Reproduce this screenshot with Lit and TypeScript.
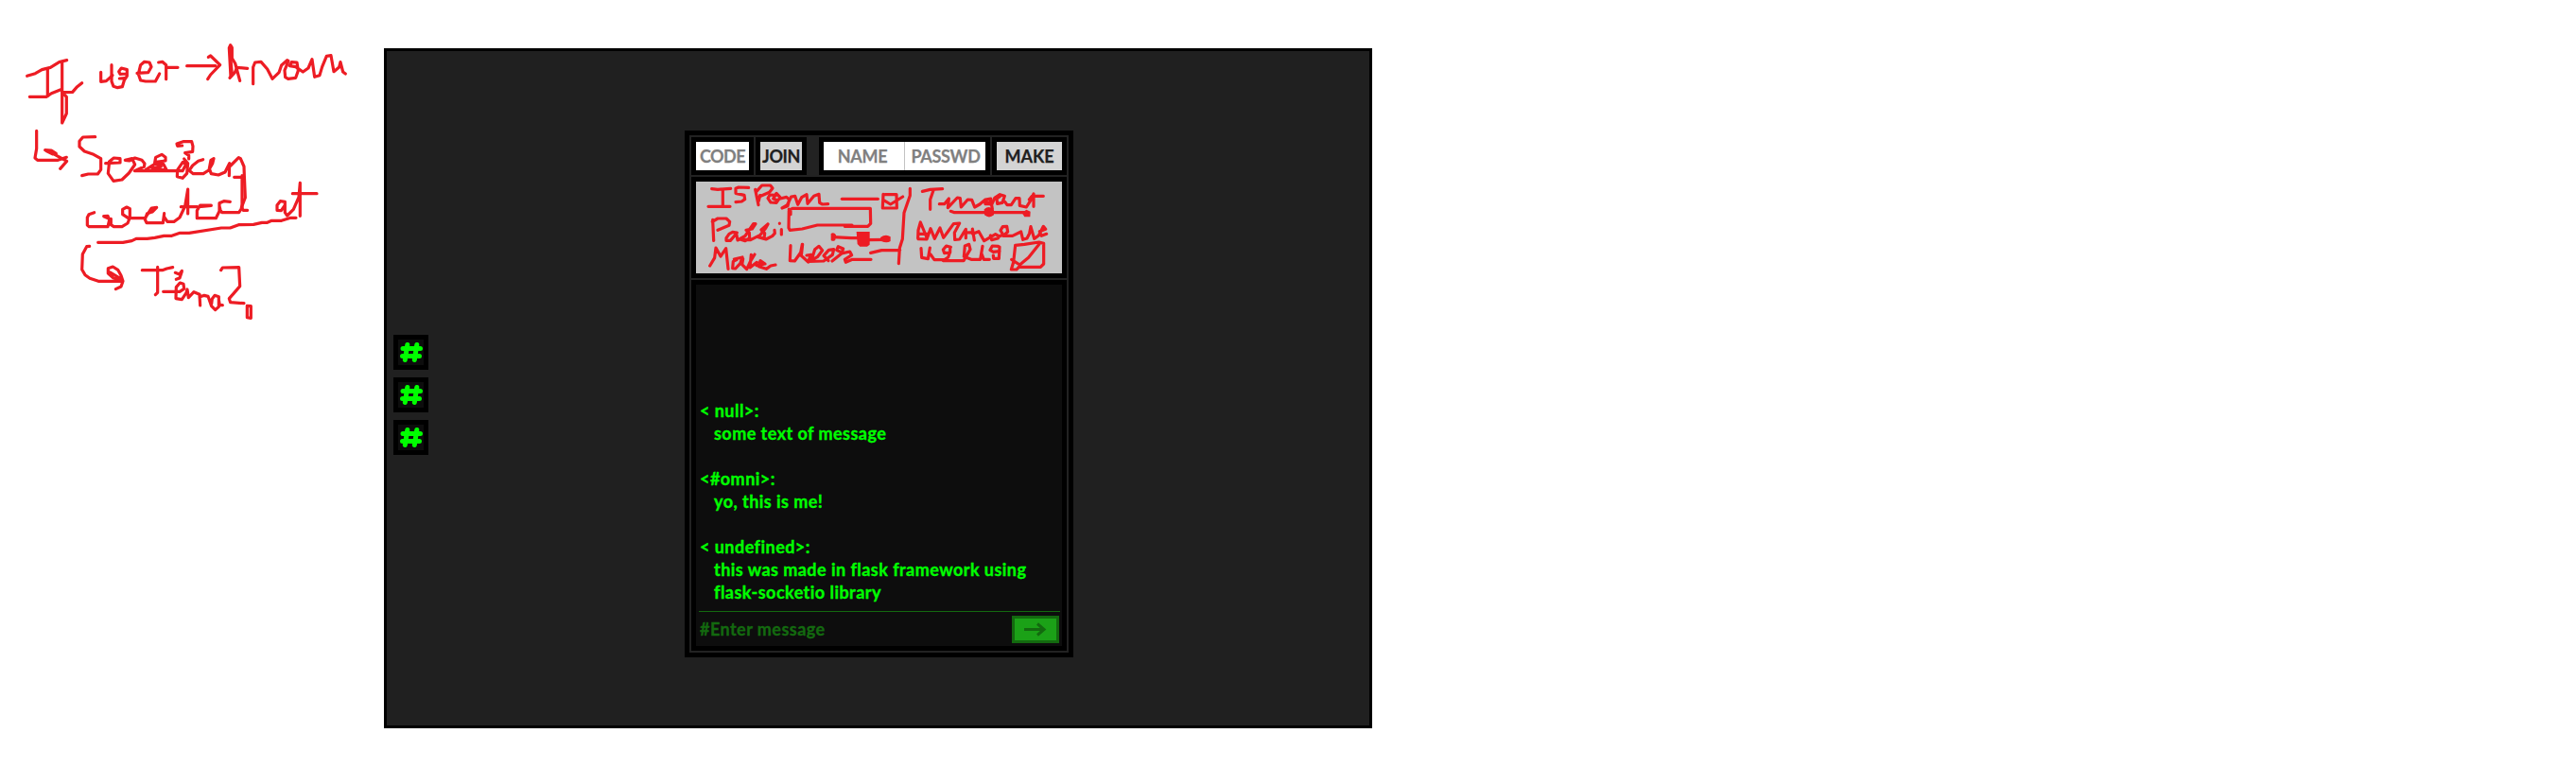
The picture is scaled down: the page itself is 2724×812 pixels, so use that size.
import { LitElement, html, css, svg } from "lit";
import { customElement } from "lit/decorators.js";

const messages = [
  { user: "< null>:", lines: ["some text of message"] },
  { user: "<#omni>:", lines: ["yo, this is me!"] },
  { user: "< undefined>:", lines: ["this was made in flask framework using", "flask-socketio library"] },
];

/* Strokes are stored at three units per pixel, grouped by origin. */
const introStrokes = [
  // "If"
  "M86 151L112 143L133 131L160 124L188 107L212 101", "M151 128V214", "M94 217H148L163 206L193 194",
  "M197 106V300L211 270V217L197 203L230 202L243 187L260 173",
  // "user"
  "M320 139V169L337 167L357 149", "M354 116V168L360 184L373 188L388 185L394 165L403 151V131L385 126L377 137L381 145L400 144M379 159L396 158",
  "M435 142L470 140L480 122L474 108L458 106L446 116L439 145L446 165L462 168H493L506 144",
  "M503 108L515 106L527 116V161M529 124H564",
  // arrow
  "M593 119H684", "M661 91L668 87L698 116L668 147L659 161",
  // "Anonn"
  "M732 152L727 62L731 53L736 61V95L746 111L761 166", "M732 100L736 145M729 157L745 140L752 124L785 127",
  "M803 176V123L809 108L828 106L848 129L864 160L885 140L893 117L911 101L915 103L903 133L905 155L914 160L938 157L946 134L942 108L925 107L919 119L938 122L961 138L978 126L990 98L998 154L1014 149L1022 122L1036 88L1050 86L1059 137L1076 123L1080 107L1088 138L1096 144",
  // corner arrow
  "M116 325V382L111 411L119 418H184L211 409", "M143 386L163 387L178 397L168 399L147 389M168 397L212 421L191 445",
];
const sessionStrokes = [
  "M92 14L53 15L42 28V45L58 60L87 70L110 83V118L100 132L70 132L50 137",
  "M125 98L171 96V83L151 81L137 92L133 130L150 154L177 150L199 129L218 102L209 83L187 88L200 90L218 81L240 88L249 99L247 109L217 122H369L380 101L370 94L353 119L352 140L369 145L383 130L386 98L374 84",
  "M252 119L280 101L284 79L303 70L315 79V90L285 94M280 101L308 100L319 120L273 114L301 108",
  "M368 42L353 43L351 36L371 29H398L402 44L401 61L377 65L389 73V84",
  "M434 86L419 91L401 105L390 121L403 131H435L452 120L464 99L468 83L459 88L454 115L460 131L483 135L504 126L518 98L517 137M522 105L547 80L553 83L564 108L565 137L568 207L556 238L561 247H575",
  "M533 142H558M558 137V240",
  // "created at"
  "M89 254L72 260L67 270V294L73 299H132L137 278L132 265L119 266L133 272M142 274V293L151 299H177L195 288L202 270V242L192 237L179 244V260L197 272H250L271 240L287 238L273 252L257 257L250 276L255 287H307L311 257M311 268L321 283H342L360 270L377 234L386 180V258M364 236H416",
  "M460 231H425L415 248V272H475L486 250V224L500 218L520 220M428 235L460 232M486 234L489 246L494 254H548L557 240",
  "M694 220L679 218L669 231V247L682 248L694 231V220V254L701 264L721 244L738 205L742 160V265M718 194H795",
];
const timeStrokes = [
  "M311 229H390L418 224L432 217H467L491 214L520 208H545L571 199H600L702 183H730L757 173L804 172L831 166H848L862 160H893L922 151H939",
  "M284 241L275 242L262 266L260 315L270 332L285 343L312 352H387", "M388 350L360 342L343 327V311L358 306L374 316L384 334L390 352L384 369L367 377M350 324L385 345",
  "M451 317H515L529 312L548 308M500 307V388L493 395", "M518 385H570L584 376L582 361L571 357L559 371L558 407L577 410L591 389L594 378L598 404L615 386L633 394L635 429M633 402L648 397L660 400L671 431L683 443L694 433V401L681 397L673 408L671 424M694 411L697 428L706 428",
  "M556 325L569 330L577 319M577 321L570 342L559 346",
  "M701 317L706 309L758 308L761 368L741 391L727 407L731 419L774 422", "M784 430V467L796 469V431Z",
];
const leftNotes = [
  "M98 209L117 211L158 208M133 210V263M87 265H156", "M215 205L183 204L174 208V223L201 229L203 242L193 249L174 251",
  "M236 211L246 260M240 217L257 198H284L291 207L281 220L250 233M251 230L247 247",
  "M302 229L282 228L276 239L285 252L303 253L315 236L303 223L293 240L307 246M315 240L335 235L344 243L339 263L321 270L337 261L350 234L362 232L371 259L383 236L399 227L402 256L422 232L438 226L440 253L449 258L467 257",
  "M511 241H625", "M343 273L342 333L346 340L385 336L433 324H543M343 277L354 271H601L602 319L593 328H520M348 274V290",
  "M101 307L104 373M100 313L117 303H144L155 313L153 325L117 340",
  "M178 348L164 346L153 352L144 365V373L157 373L176 351L180 372L204 358L216 340L230 320H237L226 336L207 340L217 348L218 366L204 374L187 369L221 371L251 356L269 334L276 321M276 321L255 339L266 350L264 367L245 362L270 369L290 359L298 350L297 340",
  "M313 318V319M319 338V354",
  "M92 453L107 428L111 396L126 423L143 398L150 463M169 432L195 426L188 446L173 462L164 461L166 439L177 434M197 431L194 449L209 464L220 440L234 417M223 418L219 459L241 442M240 452L267 447L252 437L247 455L271 463L285 453L300 450",
  "M348 389L346 437L361 438L380 411L385 385M386 385L382 421L404 441L433 425L449 404L438 391L425 401L415 433L404 439L453 438L481 418L485 401L469 403L453 421L468 437",
  "M404 439L413 418L399 420M480 438L509 415L515 399L499 392L494 403L514 413L536 408L542 419L520 433L523 442L544 433H603",
];
const sliderStrokes = [
  "M18 197L75 200H100M130 206L185 205", "M177 61L175 105H220L219 62H182M177 79L200 93L239 69",
  "M262 43V65L243 120L238 203L229 232L226 281M137 247L172 239L230 238",
];
const rightNotes = [
  "M166 217L191 211L230 209M201 214L191 243V274",
  "M220 257H236L250 240L247 269L277 237L286 239L289 267L310 243L323 244L332 267L348 258L366 243L383 240L380 256L366 257L364 245L386 261L388 272M386 259L396 237L412 227L427 232L420 253L404 256L402 240L412 233M428 250L435 260H448L462 239L474 239L475 262L496 267L510 245L519 225V265M505 243L514 232H550",
  "M256 280L268 284H501",
  "M152 366L153 340L160 315L181 366M155 352H182M153 368L180 369L192 335L205 367L222 333L233 364L247 345L265 320L284 318L268 348L269 370L284 369L304 337V365M303 348L325 347V336L331 372M326 352L345 344L362 374L398 353L410 360L422 354M422 354L414 341L421 329L434 328L437 345L423 358H452L479 345L485 370L498 366L506 350L510 329L521 367L535 357L550 328L557 337L538 344L544 358L560 352M382 357L386 371L406 366",
  "M162 398L164 427L184 431L190 396M192 417L204 434H239M256 394L242 390L232 402L236 413L254 411V395M254 409L248 426L232 437H297L318 401L314 385L301 390L298 424L321 433H350L357 391M354 415L361 433H379M407 391L388 390L381 403L391 409L411 407M411 393L409 430H392L391 420",
  "M461 388L455 442L448 465H465L472 457H541L551 447V382L536 378L490 385L461 388M449 433L475 450L503 427L537 384",
];
const paths = (list: string[]) => list.map((d) => svg`<path d=${d} />`);

@customElement("app-root")
export class AppRoot extends LitElement {
  static styles = css`
    :host { display: flex; align-items: flex-start; width: 2724px; height: 812px; overflow: hidden; background: #fff;
      font: bold 18px/24px Lato, "Open Sans", sans-serif; }
    * { box-sizing: border-box; }
    svg { display: block; flex: none; }
    .ink { fill: none; stroke: #ed1c24; stroke-width: 9.6; stroke-linecap: round; stroke-linejoin: round; }
    .dot { fill: #ed1c24; }
    .window { display: grid; grid-template-columns: 315px 411px 1fr; width: 1045px; height: 719px; margin-top: 51px;
      border: 3px solid #000; background: #202020; flex: none; }
    .rail { display: flex; flex-direction: column; gap: 8px; padding: 300px 0 0 7px; }
    .channel { width: 37px; height: 37px; border: 5px solid #000; background: #0d0d0d; }
    .panel { margin-top: 84px; height: 557px; border: 5px solid #000; background: #222; padding: 2px;
      display: flex; flex-direction: column; gap: 2px; }
    .bar { display: flex; height: 40px; gap: 2px; -webkit-text-stroke: .25px currentColor; }
    .box { border: 5px solid #000; background: #fff; display: flex; color: #808080; white-space: nowrap; }
    .cell { flex: 1; display: flex; justify-content: center; align-items: center; height: 30px; }
    .code { width: 66px; } .join { width: 54px; }
    .entry { width: 181px; margin-left: 11px; } .make { width: 79px; }
    .btn { background: #d4d4d4; color: #202020; }
    .name { flex: none; width: 86px; border-right: 1px solid #c3c3c3; padding-right: 3px; letter-spacing: -.35px; }
    .passwd { letter-spacing: -.3px; padding-left: 1px; }
    .code .cell { letter-spacing: -.5px; }
    .join .cell { letter-spacing: -.4px; }
    .options { height: 107px; border: 5px solid #000; background: #c3c3c3; }
    .chat { height: 392px; border: 5px solid #000; background: #0d0d0d; display: flex; flex-direction: column; color: #0f0;
      letter-spacing: .46px; -webkit-text-stroke: .35px currentColor; }
    .log { height: 345px; padding: 0 0 8px 4px; display: flex; flex-direction: column; justify-content: flex-end; gap: 24px; white-space: nowrap; }
    .text { padding-left: 15px; }
    .composer { margin: 0 2px 0 3px; border-top: 1px solid #13690f; display: flex; justify-content: space-between;
      padding: 4px 1px 0; color: #13690f; }
    .hint { padding-top: 2px; }
    .send { width: 50px; height: 29px; border: 3px solid #13690f; background: #1ba117; }
    .arrow { fill: none; stroke: #13690f; stroke-width: 3; }
    .hash { fill: none; stroke: #0f0; stroke-width: 5; stroke-linecap: round; }
  `;
  render() {
    return html`
      <svg width="406" height="350" viewBox="0 0 406 350">
        <g class="ink" transform="translate(0 30) scale(.33333)">${paths(introStrokes)}</g>
        <g class="ink" transform="translate(70 140) scale(.33333)">${paths(sessionStrokes)}</g>
        <g class="ink" transform="translate(0 180) scale(.33333)">${paths(timeStrokes)}</g>
      </svg>
      <div class="window">
        <div class="rail">
          ${[0, 1, 2].map(() => html`<div class="channel"><svg width="27" height="27" viewBox="0 0 27 27">
            <path class="hash" d="M9.8 5.5L7.3 21.5M19.8 5.5L17.3 21.5M5 9.5H23.5M4.5 17.5H22.5" /></svg></div>`)}
        </div>
        <div class="panel">
          <div class="bar">
            <div class="box code"><div class="cell">CODE</div></div>
            <div class="box join"><div class="cell btn">JOIN</div></div>
            <div class="box entry"><div class="cell name">NAME</div><div class="cell passwd">PASSWD</div></div>
            <div class="box make"><div class="cell btn">MAKE</div></div>
          </div>
          <div class="options">
            <svg width="387" height="97" viewBox="0 0 387 97">
              <g class="ink" transform="translate(-16 -62) scale(.33333)">${paths(leftNotes)}</g>
              <g transform="translate(139 -7) scale(.33333)">
                <g class="ink">${paths(sliderStrokes)}</g>
                <path class="dot" d="M92 180H134V221L126 227H103L95 219ZM11 186Q20 180 27 190L25 206Q17 213 11 206ZM168 198Q185 185 200 196V210Q188 217 171 210Z" />
              </g>
              <g transform="translate(184 -62) scale(.33333)">
                <g class="ink">${paths(rightNotes)}</g>
                <path class="dot" d="M362 274Q378 259 393 275V292Q378 305 363 292ZM482 285L496 275L509 281L508 298H490Z" />
              </g>
            </svg>
          </div>
          <div class="chat">
            <div class="log">
              ${messages.map((m) => html`<div><div>${m.user}</div>${m.lines.map((l) => html`<div class="text">${l}</div>`)}</div>`)}
            </div>
            <div class="composer"><span class="hint">#Enter message</span>
              <div class="send"><svg width="44" height="23" viewBox="0 0 44 23"><path class="arrow" d="M10 11.5H31M24 5.5L31 11.5L24 17.5" /></svg></div>
            </div>
          </div>
        </div>
      </div>`;
  }
}
